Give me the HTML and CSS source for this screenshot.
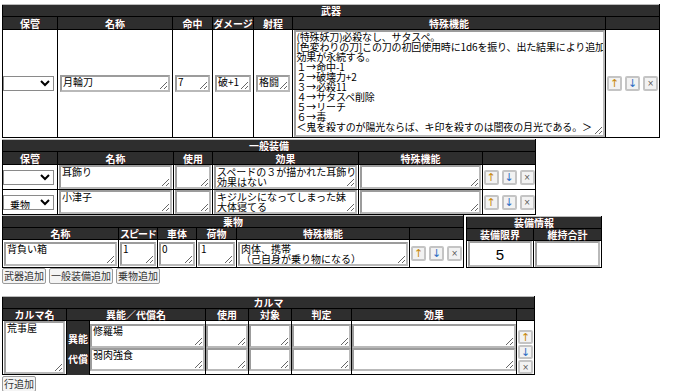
FILE: index.html
```html
<!DOCTYPE html>
<html lang="ja">
<head>
<meta charset="utf-8">
<title>装備</title>
<link rel="stylesheet" href="styles.css">
</head>
<body>
<table class="tbl weapons">
  <colgroup><col class="w1"><col class="w2"><col class="w3"><col class="w4"><col class="w5"><col class="w6"><col class="w7"></colgroup>
  <tr><th class="title" colspan="7">武器</th></tr>
  <tr class="head"><th>保管</th><th>名称</th><th>命中</th><th>ダメージ</th><th>射程</th><th>特殊機能</th><th></th></tr>
  <tr class="wrow">
    <td class="selcell"><select class="sel"><option></option><option>乗物</option></select></td>
    <td><textarea class="ta short">月輪刀</textarea></td>
    <td><textarea class="ta short">7</textarea></td>
    <td><textarea class="ta short">破+1</textarea></td>
    <td><textarea class="ta short">格闘</textarea></td>
    <td><textarea class="ta big">(特殊妖刀)必殺なし、サタスペ。
[色変わりの刀]この刀の初回使用時に1d6を振り、出た結果により追加
効果が永続する。
１→命中-1
２→破壊力+2
３→必殺11
４→サタスペ削除
５→リーチ
６→毒
＜鬼を殺すのが陽光ならば、キ印を殺すのは闇夜の月光である。＞</textarea></td>
    <td><div class="mvs"><button class="mv up">↑</button><button class="mv dn">↓</button><button class="mv del">×</button></div></td>
  </tr>
</table>

<table class="tbl general">
  <colgroup><col class="g1"><col class="g2"><col class="g3"><col class="g4"><col class="g5"><col class="g6"></colgroup>
  <tr><th class="title" colspan="6">一般装備</th></tr>
  <tr class="head"><th>保管</th><th>名称</th><th>使用</th><th>効果</th><th>特殊機能</th><th></th></tr>
  <tr class="grow">
    <td class="selcell"><select class="sel"><option selected></option><option>乗物</option></select></td>
    <td><textarea class="ta mid">耳飾り</textarea></td>
    <td><textarea class="ta mid"></textarea></td>
    <td><textarea class="ta mid">スペードの３が描かれた耳飾り
効果はない</textarea></td>
    <td><textarea class="ta mid"></textarea></td>
    <td><div class="mvs"><button class="mv up">↑</button><button class="mv dn">↓</button><button class="mv del">×</button></div></td>
  </tr>
  <tr class="grow">
    <td class="selcell"><select class="sel"><option></option><option selected>乗物</option></select></td>
    <td><textarea class="ta mid">小津子</textarea></td>
    <td><textarea class="ta mid"></textarea></td>
    <td><textarea class="ta mid">キジルシになってしまった妹
大体寝てる</textarea></td>
    <td><textarea class="ta mid"></textarea></td>
    <td><div class="mvs"><button class="mv up">↑</button><button class="mv dn">↓</button><button class="mv del">×</button></div></td>
  </tr>
</table>

<div class="pair">
  <table class="tbl vehicle">
    <colgroup><col class="v1"><col class="v2"><col class="v3"><col class="v4"><col class="v5"><col class="v6"></colgroup>
    <tr><th class="title" colspan="6">乗物</th></tr>
    <tr class="head"><th>名称</th><th class="tight">スピード</th><th>車体</th><th>荷物</th><th>特殊機能</th><th></th></tr>
    <tr class="vrow">
      <td><textarea class="ta mid">背負い箱</textarea></td>
      <td><textarea class="ta mid">1</textarea></td>
      <td><textarea class="ta mid">0</textarea></td>
      <td><textarea class="ta mid">1</textarea></td>
      <td><textarea class="ta mid">肉体、携帯
（己自身が乗り物になる）</textarea></td>
      <td><div class="mvs"><button class="mv up">↑</button><button class="mv dn">↓</button><button class="mv del">×</button></div></td>
    </tr>
  </table>
  <table class="tbl info">
    <colgroup><col class="i1"><col class="i2"></colgroup>
    <tr><th class="title" colspan="2">装備情報</th></tr>
    <tr class="head"><th>装備限界</th><th>維持合計</th></tr>
    <tr class="irow">
      <td><input class="num" type="text" value="5"></td>
      <td><input class="num" type="text" value=""></td>
    </tr>
  </table>
</div>

<div class="addbar">
  <button class="add">武器追加</button>
  <button class="add">一般装備追加</button>
  <button class="add">乗物追加</button>
</div>

<table class="tbl karma">
  <colgroup><col class="k1"><col class="k2"><col class="k3"><col class="k4"><col class="k5"><col class="k6"><col class="k7"><col class="k8"></colgroup>
  <tr><th class="title" colspan="8">カルマ</th></tr>
  <tr class="head"><th>カルマ名</th><th colspan="2">異能／代償名</th><th>使用</th><th>対象</th><th>判定</th><th>効果</th><th></th></tr>
  <tr class="krow1">
    <td class="kname" rowspan="2"><textarea class="ta kta">荒事屋</textarea></td>
    <th class="lbl">異能</th>
    <td><textarea class="ta kcell">修羅場</textarea></td>
    <td><textarea class="ta kcell"></textarea></td>
    <td><textarea class="ta kcell"></textarea></td>
    <td><textarea class="ta kcell"></textarea></td>
    <td><textarea class="ta kcell"></textarea></td>
    <td class="kbtns" rowspan="2"><div class="mvcol"><button class="mv up">↑</button><button class="mv dn">↓</button><button class="mv del">×</button></div></td>
  </tr>
  <tr class="krow2">
    <th class="lbl">代償</th>
    <td><textarea class="ta kcell">弱肉強食</textarea></td>
    <td><textarea class="ta kcell"></textarea></td>
    <td><textarea class="ta kcell"></textarea></td>
    <td><textarea class="ta kcell"></textarea></td>
    <td><textarea class="ta kcell"></textarea></td>
  </tr>
</table>
<div class="addbar2"><button class="add">行追加</button></div>
</body>
</html>
```

FILE: styles.css
```css
* { box-sizing: border-box; }
body {
  margin: 4px 2px 0;
  font-family: "Noto Sans CJK JP", "Noto Sans", sans-serif;
  font-size: 10px;
  color: #000;
  background: #fff;
}
.tbl { border-collapse: collapse; table-layout: fixed; }
.tbl th, .tbl td { border: 1px solid #000; padding: 0; }
.tbl th {
  background: #2e2e2e;
  color: #fff;
  font-weight: bold;
  font-size: 10px;
  line-height: 11px;
  white-space: nowrap;
  text-shadow: 1px 0 0 #401010;
}
.tbl .tight { letter-spacing: -1px; }
.tbl .title { height: 12px; border-top-color: #bbb; }
.tbl .head th { height: 13px; }
.tbl td { vertical-align: middle; }

.weapons { width: 657px; }
.w1 { width: 55px; } .w2 { width: 115px; } .w3 { width: 40px; } .w4 { width: 41px; }
.w5 { width: 39px; } .w6 { width: 313px; } .w7 { width: 54px; }

.general { width: 533px; margin-top: 1px; }
.g1 { width: 55px; } .g2 { width: 116px; } .g3 { width: 39px; } .g4 { width: 146px; }
.g5 { width: 124px; } .g6 { width: 53px; }

.pair { display: flex; align-items: flex-start; gap: 2px; margin-top: 0; }
.vehicle { width: 461px; }
.vehicle .title { height: 11px; }
.vehicle .head th { height: 12px; }
.v1 { width: 116px; } .v2 { width: 39px; } .v3 { width: 39px; } .v4 { width: 40px; }
.v5 { width: 173px; } .v6 { width: 54px; }
.info { width: 135px; margin-top: 1px; }
.info .head th { height: 12px; }
.i1 { width: 67px; } .i2 { width: 68px; }

.karma { width: 532px; margin-top: 12px; }
.karma .head th { height: 12px; }
.k1 { width: 64px; } .k2 { width: 23px; } .k3 { width: 116px; } .k4 { width: 43px; }
.k5 { width: 43px; } .k6 { width: 60px; } .k7 { width: 165px; } .k8 { width: 18px; }

.ta {
  display: block;
  margin: 0 auto;
  width: calc(100% - 2px);
  font-family: inherit;
  font-size: 10px;
  line-height: 10px;
  padding: 0 1px;
  border: 2px solid #b9b9b9;
  border-top-color: #9c9c9c;
  border-left-color: #9c9c9c;
  background: #fff;
  color: #000;
  white-space: pre;
  overflow: hidden;
}
.short { height: 17px; width: calc(100% - 4px); }
.big { height: 107px; width: calc(100% - 1px); letter-spacing: -0.15px; }
.mid { height: 24px; }

.selcell { padding-left: 1px; }
.sel {
  display: block;
  width: 51px;
  height: 15px;
  font-family: inherit;
  font-size: 10px;
  padding: 0 0 0 2px;
  border: 1px solid #8a8a8a;
  border-radius: 0;
  background: #fff;
  color: #000;
}

.mvs { display: flex; justify-content: center; gap: 3px; }
.mvcol { display: flex; flex-direction: column; align-items: center; gap: 1px; }
.mv {
  width: 15px;
  height: 15px;
  padding: 0;
  margin: 0;
  font-family: "DejaVu Sans", sans-serif;
  font-size: 11px;
  line-height: 11px;
  background: #f2f2f2;
  border: 2px solid #c4c4c4;
  border-radius: 2px;
}
.up { color: #c88a10; }
.dn { color: #2f6fc4; }
.del { color: #555; font-size: 8px; }
.mvcol .mv { height: 14px; }

.irow td { height: 27px; }
.num {
  display: block;
  width: calc(100% - 2px);
  height: 26px;
  margin: 0 auto;
  font-family: "Liberation Sans", sans-serif;
  font-size: 15px;
  text-align: center;
  border: 2px solid #b9b9b9;
  border-top-color: #9c9c9c;
  border-left-color: #9c9c9c;
  padding: 0;
}

.addbar { display: flex; gap: 3px; margin-top: 0; }
.addbar2 { display: flex; margin-top: 1px; }
.add {
  height: 16px;
  padding: 0 1px;
  font-family: inherit;
  font-size: 10px;
  line-height: 12px;
  color: #333;
  background: #f4f4f4;
  border: 1px solid #9a9a9a;
  border-radius: 2px;
}

.grow td { height: 25px; }
.vrow td { height: 28px; }

.krow1 td, .krow2 td { border-top: none; border-bottom: none; }
.karma tr:last-child td { border-bottom: 1px solid #000; }
.krow1 td { height: 27px; vertical-align: bottom; }
.krow2 td { height: 27px; vertical-align: top; }
.tbl .lbl { border-top: none; border-bottom: none; vertical-align: middle; }
.krow1 .lbl { padding-top: 8px; }
.krow2 .lbl { padding-bottom: 6px; }
.kname { vertical-align: top; padding-top: 1px; }
.tbl .kname, .tbl .kbtns { border-bottom: 1px solid #000; }
.kta { height: 53px; width: calc(100% - 2px); }
.kcell { height: 24px; width: 100%; }
.krow2 .kcell { height: 23px; }
.kbtns { vertical-align: middle; }
```
